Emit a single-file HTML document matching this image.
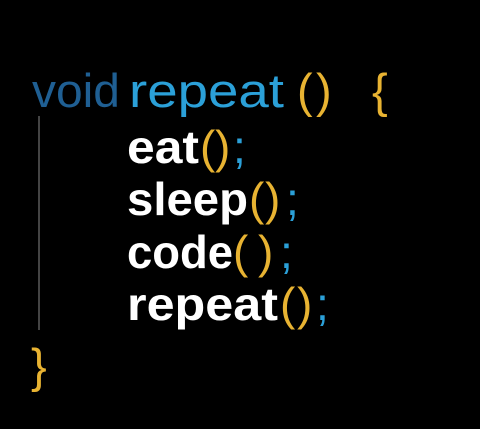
<!DOCTYPE html>
<html><head><style>
html,body{margin:0;padding:0;background:#000;width:480px;height:429px;overflow:hidden}
svg{display:block}
text{font-family:"Liberation Sans",sans-serif}
</style></head><body>
<svg width="480" height="429" viewBox="0 0 480 429">
<rect width="480" height="429" fill="#000"/>
<line x1="39" y1="116" x2="39" y2="330" stroke="#5a5a5a" stroke-width="1.5"/>
<text x="32" y="107" font-size="47" fill="#1f5f93" textLength="88" lengthAdjust="spacingAndGlyphs">void</text>
<text x="129" y="107" font-size="47" fill="#2ba0d8" textLength="155" lengthAdjust="spacingAndGlyphs">repeat</text>
<text x="297" y="107" font-size="47" fill="#e8b332">(</text>
<text x="316" y="107" font-size="47" fill="#e8b332">)</text>
<text x="372" y="107" font-size="47" fill="#e8b332">{</text>

<g font-size="46" font-weight="bold" fill="#fff" lengthAdjust="spacingAndGlyphs">
<text x="127" y="163" textLength="72" lengthAdjust="spacingAndGlyphs">eat</text>
<text x="127" y="215" textLength="121" lengthAdjust="spacingAndGlyphs">sleep</text>
<text x="127" y="268" textLength="106" lengthAdjust="spacingAndGlyphs">code</text>
<text x="127" y="320" textLength="151" lengthAdjust="spacingAndGlyphs">repeat</text>
</g>
<g font-size="46" fill="#e8b332">
<text x="200" y="163">(</text><text x="215" y="163">)</text>
<text x="249" y="215">(</text><text x="265" y="215">)</text>
<text x="233" y="268">(</text><text x="258" y="268">)</text>
<text x="280" y="320">(</text><text x="297" y="320">)</text>
</g>
<g font-size="46" fill="#2ba0d8">
<text x="233" y="163">;</text>
<text x="286" y="215">;</text>
<text x="280" y="268">;</text>
<text x="316" y="320">;</text>
</g>
<text x="31" y="382" font-size="47" fill="#e8b332">}</text>
</svg>
</body></html>
